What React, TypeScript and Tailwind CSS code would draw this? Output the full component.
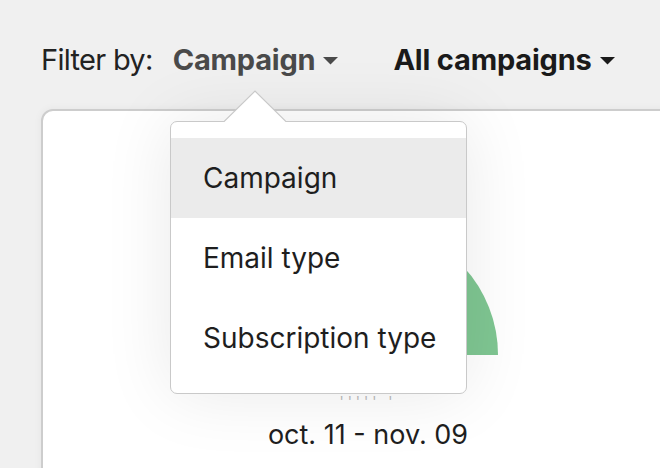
import React from "react";

const Caret = ({ color }: { color: string }) => (
  <svg width="15" height="8" viewBox="0 0 15 8" className="ml-[8px] mt-[2px]">
    <polygon points="0,0 15,0 7.5,7.5" fill={color} />
  </svg>
);

function arcPath(cx: number, cy: number, r: number, a0: number, a1: number) {
  const rad = (a: number) => (a * Math.PI) / 180;
  const x0 = cx + r * Math.cos(rad(a0));
  const y0 = cy - r * Math.sin(rad(a0));
  const x1 = cx + r * Math.cos(rad(a1));
  const y1 = cy - r * Math.sin(rad(a1));
  return `M${cx},${cy} L${x0},${y0} A${r},${r} 0 0 1 ${x1},${y1} Z`;
}

export default function App() {
  return (
    <div
      className="relative w-[660px] h-[468px] overflow-hidden bg-[#f0f0f0] text-[#1f1f1f]"
      style={{ fontFamily: "Inter, 'Noto Sans', sans-serif" }}
    >
      <div className="flex pl-[41px] pt-[42px] h-[109px] items-start">
        <div className="flex items-center h-[36px] text-[29px] tracking-[-0.2px] whitespace-nowrap">
          <span className="text-[#222] tracking-[-0.7px]">Filter by:</span>
          <span className="ml-[20px] font-bold text-[#4a4a4a] flex items-center">
            Campaign
            <Caret color="#4a4a4a" />
          </span>
          <span className="ml-[55px] font-bold text-[#1a1a1a] flex items-center">
            All campaigns
            <Caret color="#1a1a1a" />
          </span>
        </div>
      </div>

      <div className="ml-[41px] w-[654px] h-[400px] bg-white border-2 border-[#cdcdcd] rounded-[12px] shadow-[0_0_8px_rgba(0,0,0,0.05)] flex flex-col items-center">
        <svg width="300" height="140" viewBox="0 0 300 140" className="mt-[112px]">
          <path d={arcPath(150, 132, 130, 180, 43)} fill="#e5e5e5" />
          <path d={arcPath(150, 132, 130, 43, 0)} fill="#7fc692" />
        </svg>
        <div className="mt-[28px] text-[#bbb] text-[14px] tracking-[4px]">''''' '</div>
        <div className="mt-[3px] text-[27px] text-[#1f1f1f] whitespace-nowrap">oct. 11 - nov. 09</div>
      </div>

      <div className="absolute left-[170px] top-[121px] w-[297px] h-[273px] bg-white border border-[#c9c9c9] rounded-[7px] shadow-[0_0_70px_rgba(0,0,0,0.09)] pt-[16px] text-[28px] text-[#1e1e1e] whitespace-nowrap">
        <div className="h-[80px] bg-[#ebebeb] flex items-center pl-[32px]">Campaign</div>
        <div className="h-[80px] flex items-center pl-[32px]">Email type</div>
        <div className="h-[80px] flex items-center pl-[32px]">Subscription type</div>
      </div>
      <svg
        className="absolute left-[224px] top-[90px]"
        width="62"
        height="33"
        viewBox="0 0 62 33"
      >
        <polygon points="0,32 31,1 62,32" fill="white" />
        <polyline points="0,31.5 31,1 62,31.5" fill="none" stroke="#c9c9c9" strokeWidth="1.2" />
      </svg>
    </div>
  );
}
